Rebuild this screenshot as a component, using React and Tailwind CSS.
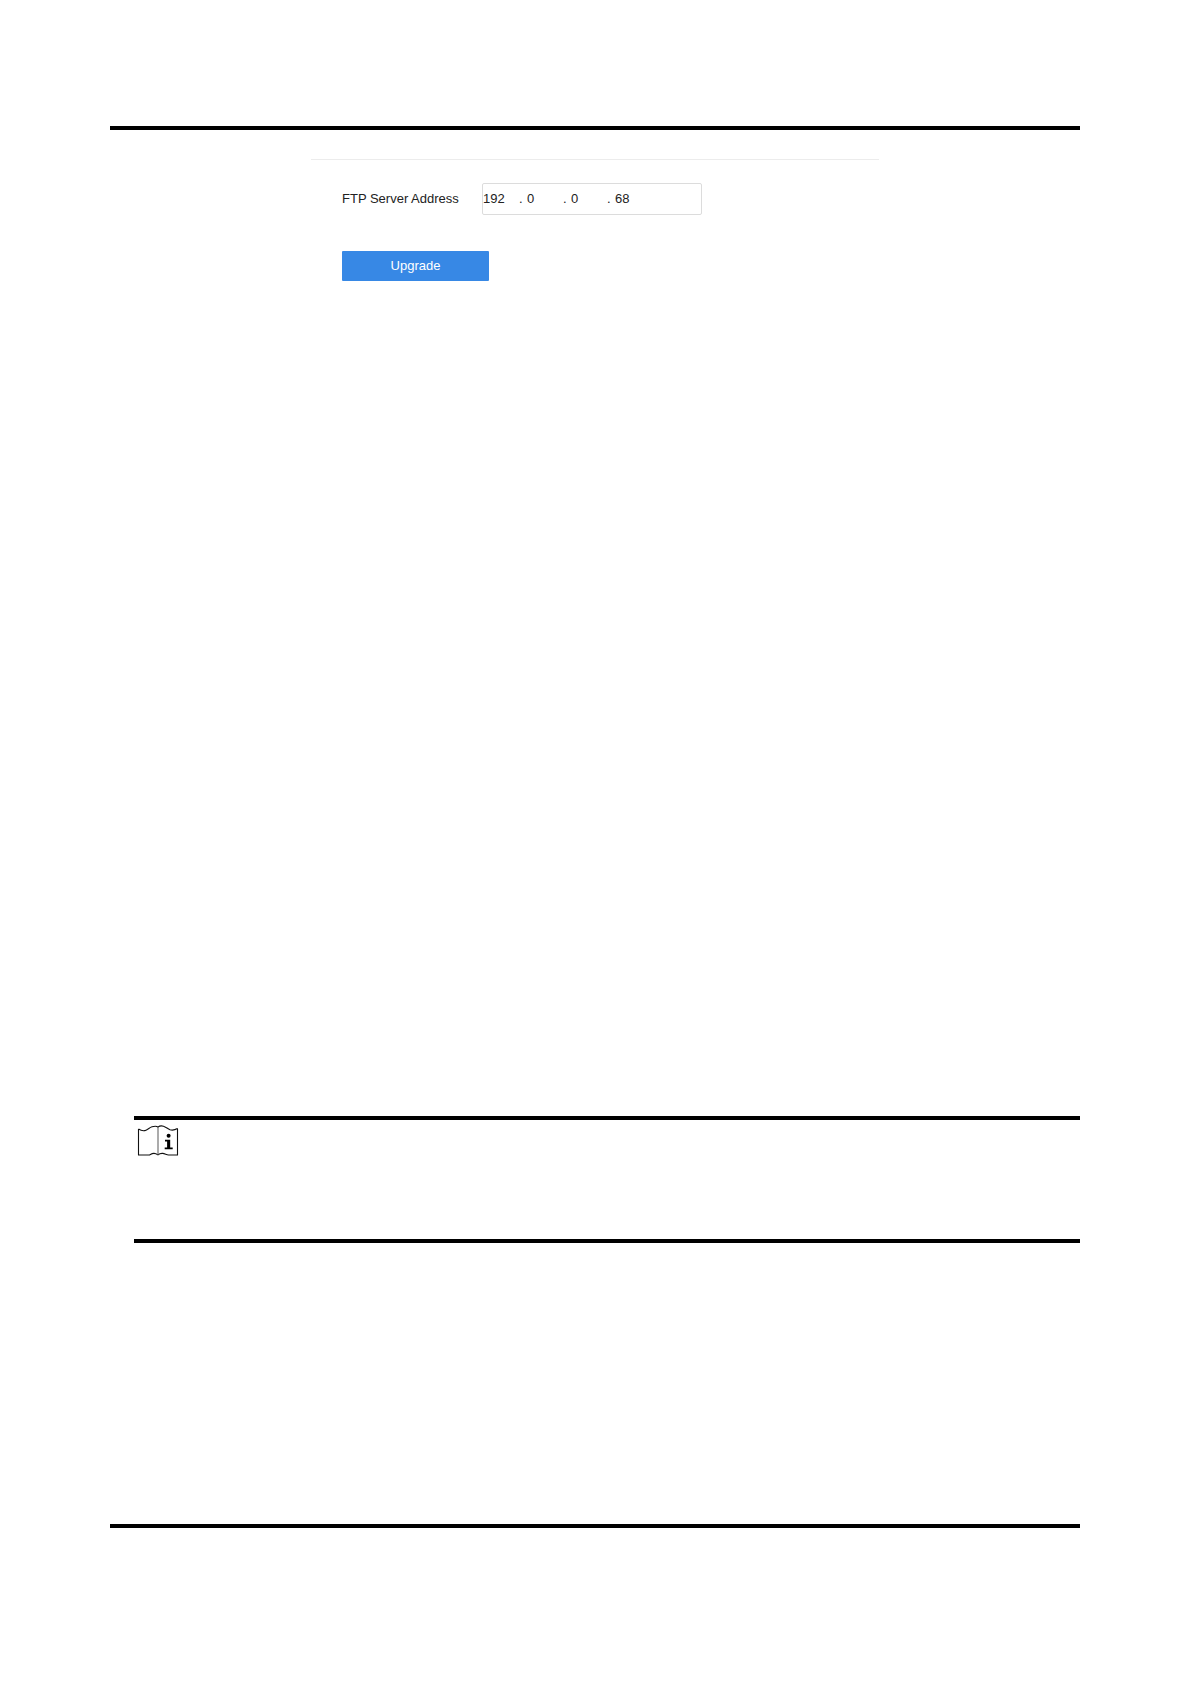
import React, { useState } from 'react';

const OCTET_LABELS = ['First octet', 'Second octet', 'Third octet', 'Fourth octet'];

function NoteIcon() {
  return (
    <svg
      className="block h-8 w-[42px]"
      viewBox="0 0 42 32"
      fill="none"
      stroke="#111111"
      strokeWidth="1.1"
      role="img"
      aria-label="Note"
    >
      {/* Open book */}
      <path d="M1.5 5 V31 H12.5 C14 30.2 15.5 29.3 17 29.4 C19 29.5 20 30.2 21 30.8 C22 30 23.5 29.3 25.5 29.4 C28 29.6 29.5 31 31.5 31 H40.5 V4.6" />
      <path d="M1.5 5 C4 6.6 7 7 9 6.2 C11.5 5.2 12.5 3.6 15 2.8 C17.5 2 19.8 2 21 3.2 C22.5 1.8 24.5 1.6 26.5 2.2 C29 3 30.5 4.8 33 5.8 C35.5 6.6 38 6 40.5 4.6" />
      <path d="M21 3.2 V30.8" stroke="#666666" />
      {/* Info mark */}
      <circle cx="31.6" cy="11.7" r="2" fill="#000000" stroke="none" />
      <path d="M28 15.8 H33.2 V23.6 H35.7 V25.2 H27.7 V23.6 H30.1 V17.4 H28 Z" fill="#000000" stroke="none" />
    </svg>
  );
}

function IpAddressInput({ id, value, onChange }) {
  const handleChange = (index, octet) => {
    onChange(value.map((v, i) => (i === index ? octet : v)));
  };

  return (
    <div className="flex h-8 w-[220px] items-center rounded-xs border border-[#dcdcdc] bg-white">
      {value.map((octet, i) => (
        <React.Fragment key={OCTET_LABELS[i]}>
          {i > 0 && <span className="w-2">.</span>}
          <input
            id={i === 0 ? id : undefined}
            aria-label={i === 0 ? undefined : OCTET_LABELS[i]}
            className="w-9 bg-transparent outline-none"
            type="text"
            inputMode="numeric"
            maxLength={3}
            value={octet}
            onChange={(e) => handleChange(i, e.target.value)}
          />
        </React.Fragment>
      ))}
    </div>
  );
}

export default function App() {
  const [address, setAddress] = useState(['192', '0', '0', '68']);

  return (
    <div className="flex min-h-screen flex-col bg-white pt-[126px] pr-[111px] pb-[156px] pl-[110px] font-['Liberation_Sans',Arial,sans-serif] text-[13px] leading-4 text-[#222222]">
      <main className="flex grow flex-col border-y-4 border-black">
        {/* Upgrade form */}
        <form
          className="mx-auto mt-[29px] w-full max-w-[568px] grow border-t border-[#ececec] px-[31px] pt-[23px]"
          onSubmit={(e) => e.preventDefault()}
        >
          <div className="flex items-center gap-5">
            <label htmlFor="ftp-server" className="min-w-[120px] whitespace-nowrap">
              FTP Server Address
            </label>
            <IpAddressInput id="ftp-server" value={address} onChange={setAddress} />
          </div>
          <button
            type="submit"
            className="mt-9 h-[30px] w-[147px] rounded-[1px] bg-[#3788e5] text-white"
          >
            Upgrade
          </button>
        </form>

        {/* Note */}
        <aside className="mb-[281px] ml-6 min-h-[127px] border-y-4 border-black px-[3px] pt-1">
          <NoteIcon />
        </aside>
      </main>
    </div>
  );
}
